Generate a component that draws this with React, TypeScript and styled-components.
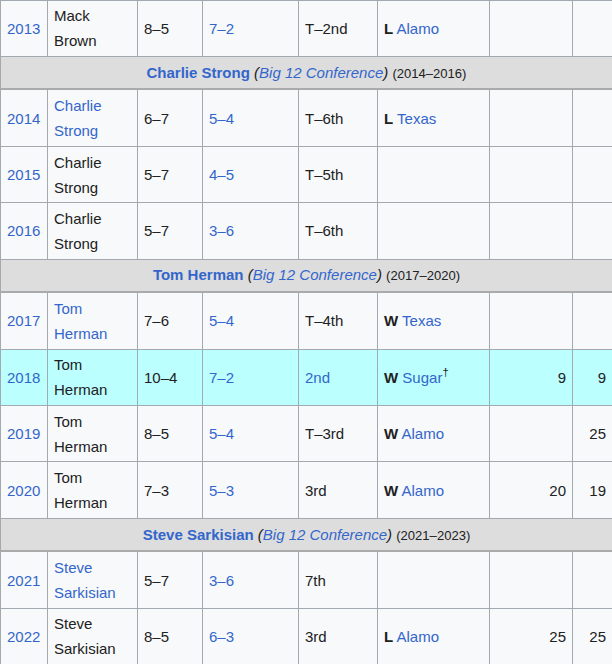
import styled, { createGlobalStyle } from 'styled-components';

const GlobalStyle = createGlobalStyle`
  html, body { margin: 0; padding: 0; background: #ffffff; }
  body { overflow: hidden; }
`;

const Wrap = styled.div`
  width: 612px;
  height: 664px;
  overflow: hidden;
`;

const Table = styled.table`
  border-collapse: collapse;
  table-layout: fixed;
  width: 612px;
  margin-top: -0.5px;
  background: #f8f9fa;
  color: #202122;
  font-family: "Liberation Sans", Arial, sans-serif;
  font-size: 15px;
  line-height: 25px;
`;

const Row = styled.tr<{ $highlight?: boolean }>`
  background: ${(p) => (p.$highlight ? '#bbffff' : '#f8f9fa')};
`;

const Cell = styled.td<{ $right?: boolean }>`
  border: 1px solid #a2a9b1;
  padding: 2.72px 6px;
  vertical-align: middle;
  text-align: ${(p) => (p.$right ? 'right' : 'left')};
  overflow: hidden;
`;

const TenureCell = styled.th`
  border: 1px solid #a2a9b1;
  border-bottom: 2px solid #aaaaaa;
  background: #dddddd;
  padding: 2.72px 6px;
  text-align: center;
  font-weight: normal;
`;

const A = styled.span<{ $bold?: boolean }>`
  color: #3366cc;
  font-weight: ${(p) => (p.$bold ? 700 : 400)};
`;

const Result = styled.b`
  font-weight: 700;
  color: #202122;
`;

const Conf = styled.i`
  font-style: italic;
`;

const Years = styled.span`
  font-size: 87%;
`;

const Dagger = styled.sup`
  font-size: 75%;
  line-height: 1;
  vertical-align: 0.6em;
`;

type Season = {
  year: string;
  coach: string;
  coachLink?: boolean;
  overall: string;
  conf: string;
  standing: string;
  standingLink?: boolean;
  bowl?: [string, string];
  sugar?: boolean;
  coaches?: string;
  ap?: string;
  highlight?: boolean;
};

type Tenure = { coach: string; years: string };

type Item = { kind: 'season'; s: Season } | { kind: 'tenure'; t: Tenure };

const items: Item[] = [
  { kind: 'season', s: { year: '2013', coach: 'Mack Brown', overall: '8–5', conf: '7–2', standing: 'T–2nd', bowl: ['L', 'Alamo'] } },
  { kind: 'tenure', t: { coach: 'Charlie Strong', years: '(2014–2016)' } },
  { kind: 'season', s: { year: '2014', coach: 'Charlie Strong', coachLink: true, overall: '6–7', conf: '5–4', standing: 'T–6th', bowl: ['L', 'Texas'] } },
  { kind: 'season', s: { year: '2015', coach: 'Charlie Strong', overall: '5–7', conf: '4–5', standing: 'T–5th' } },
  { kind: 'season', s: { year: '2016', coach: 'Charlie Strong', overall: '5–7', conf: '3–6', standing: 'T–6th' } },
  { kind: 'tenure', t: { coach: 'Tom Herman', years: '(2017–2020)' } },
  { kind: 'season', s: { year: '2017', coach: 'Tom Herman', coachLink: true, overall: '7–6', conf: '5–4', standing: 'T–4th', bowl: ['W', 'Texas'] } },
  { kind: 'season', s: { year: '2018', coach: 'Tom Herman', overall: '10–4', conf: '7–2', standing: '2nd', standingLink: true, bowl: ['W', 'Sugar'], sugar: true, coaches: '9', ap: '9', highlight: true } },
  { kind: 'season', s: { year: '2019', coach: 'Tom Herman', overall: '8–5', conf: '5–4', standing: 'T–3rd', bowl: ['W', 'Alamo'], ap: '25' } },
  { kind: 'season', s: { year: '2020', coach: 'Tom Herman', overall: '7–3', conf: '5–3', standing: '3rd', bowl: ['W', 'Alamo'], coaches: '20', ap: '19' } },
  { kind: 'tenure', t: { coach: 'Steve Sarkisian', years: '(2021–2023)' } },
  { kind: 'season', s: { year: '2021', coach: 'Steve Sarkisian', coachLink: true, overall: '5–7', conf: '3–6', standing: '7th' } },
  { kind: 'season', s: { year: '2022', coach: 'Steve Sarkisian', overall: '8–5', conf: '6–3', standing: '3rd', bowl: ['L', 'Alamo'], coaches: '25', ap: '25' } },
];

const widths = [47, 90, 65, 96, 79, 112, 83, 40];

function SeasonRow({ s }: { s: Season }) {
  return (
    <Row $highlight={s.highlight}>
      <Cell><A>{s.year}</A></Cell>
      <Cell>{s.coachLink ? <A>{s.coach}</A> : s.coach}</Cell>
      <Cell>{s.overall}</Cell>
      <Cell><A>{s.conf}</A></Cell>
      <Cell>{s.standingLink ? <A>{s.standing}</A> : s.standing}</Cell>
      <Cell>
        {s.bowl && (
          <>
            <Result>{s.bowl[0]}</Result> <A>{s.bowl[1]}</A>
            {s.sugar && <Dagger>†</Dagger>}
          </>
        )}
      </Cell>
      <Cell $right>{s.coaches}</Cell>
      <Cell $right>{s.ap}</Cell>
    </Row>
  );
}

function TenureRow({ t }: { t: Tenure }) {
  return (
    <Row>
      <TenureCell colSpan={8}>
        <A $bold>{t.coach}</A> <Conf>(<A>Big 12 Conference</A>)</Conf> <Years>{t.years}</Years>
      </TenureCell>
    </Row>
  );
}

export default function App() {
  return (
    <Wrap>
      <GlobalStyle />
      <Table>
        <colgroup>
          {widths.map((w, i) => (
            <col key={i} style={{ width: w }} />
          ))}
        </colgroup>
        <tbody>
          {items.map((it, i) =>
            it.kind === 'season' ? <SeasonRow key={i} s={it.s} /> : <TenureRow key={i} t={it.t} />
          )}
        </tbody>
      </Table>
    </Wrap>
  );
}
